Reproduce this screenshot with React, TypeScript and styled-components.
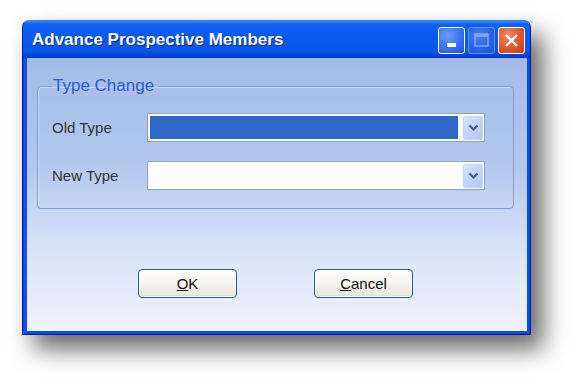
import React from "react";
import styled, { createGlobalStyle } from "styled-components";

const GlobalStyle = createGlobalStyle`
  html, body {
    margin: 0;
    padding: 0;
    background: #ffffff;
  }
  body {
    font-family: "Liberation Sans", Arial, sans-serif;
  }
`;

function ChevronDown() {
  return (
    <svg width="11" height="8" viewBox="0 0 11 8">
      <path d="M1.5 1.5 L5.5 5.5 L9.5 1.5" fill="none" stroke="#4a5a7c" strokeWidth="2.2" />
    </svg>
  );
}

function Combo({ selected }: { selected?: boolean }) {
  return (
    <ComboBox>
      <ComboValue selected={selected} />
      <ComboButton>
        <ChevronDown />
      </ComboButton>
    </ComboBox>
  );
}

function App() {
  return (
    <Page>
      <GlobalStyle />
      <Window>
        <TitleBar>
          <Title>Advance Prospective Members</Title>
          <Controls>
            <CtlButton>
              <svg width="9" height="4" viewBox="0 0 9 4">
                <rect x="0" y="0" width="9" height="4" fill="#ffffff" />
              </svg>
            </CtlButton>
            <CtlButton disabled>
              <svg width="15" height="14" viewBox="0 0 15 14">
                <rect x="1" y="1" width="13" height="12" fill="none" stroke="#8fb0f2" strokeWidth="1.5" />
                <rect x="1" y="1" width="13" height="3" fill="#8fb0f2" />
              </svg>
            </CtlButton>
            <CloseButton>
              <svg width="15" height="15" viewBox="0 0 15 15">
                <path d="M2 2 L13 13 M13 2 L2 13" stroke="#ffffff" strokeWidth="2.4" />
              </svg>
            </CloseButton>
          </Controls>
        </TitleBar>
        <Client>
          <Group>
            <Legend>Type Change</Legend>
            <Row>
              <Label>Old Type</Label>
              <Combo selected />
            </Row>
            <Row>
              <Label>New Type</Label>
              <Combo />
            </Row>
          </Group>
          <Buttons>
            <PushButton>
              <u>O</u>K
            </PushButton>
            <PushButton>
              <u>C</u>ancel
            </PushButton>
          </Buttons>
        </Client>
      </Window>
    </Page>
  );
}

const Page = styled.div`
  width: 586px;
  height: 391px;
  padding: 20px 0 0 22px;
  box-sizing: border-box;
  overflow: hidden;
`;

const Window = styled.div`
  width: 509px;
  height: 315px;
  box-sizing: border-box;
  display: flex;
  flex-direction: column;
  background: linear-gradient(90deg, #0a3fd8 0, #1659ee 2px, #0d4ae0 4px);
  border: 1px solid #0019a8;
  border-top-color: #2f7bff;
  border-radius: 7px 7px 0 0;
  padding: 0 3px 3px 4px;
  box-shadow: 12px 14px 24px rgba(0, 0, 0, 0.6);
`;

const TitleBar = styled.div`
  height: 37px;
  flex-shrink: 0;
  margin: 0 -3px 0 -4px;
  border-radius: 6px 6px 0 0;
  display: flex;
  align-items: center;
  justify-content: space-between;
  padding: 0 5px 0 9px;
  background: linear-gradient(
    #3d8dfb 0,
    #0b62f4 3px,
    #0a5aed 40%,
    #0656e9 80%,
    #0543d3 94%,
    #0336c2 100%
  );
`;

const Title = styled.div`
  color: #ffffff;
  font-weight: bold;
  font-size: 17px;
  text-shadow: 1px 1px 0 #0a2a8a;
  margin-top: 1px;
`;

const Controls = styled.div`
  display: flex;
  gap: 3px;
  margin-top: 1px;
`;

const CtlButton = styled.div<{ disabled?: boolean }>`
  width: 27px;
  height: 27px;
  box-sizing: border-box;
  border: 1px solid ${(p) => (p.disabled ? "#6f95ef" : "#ffffff")};
  border-radius: 3px;
  display: flex;
  align-items: ${(p) => (p.disabled ? "center" : "flex-end")};
  justify-content: center;
  padding-bottom: ${(p) => (p.disabled ? "0" : "6px")};
  background: ${(p) =>
    p.disabled
      ? "radial-gradient(circle at 40% 35%, #4c82f0 0, #2c62e6 60%, #1f52d8 100%)"
      : "radial-gradient(circle at 35% 30%, #6d9cff 0, #3a71f3 55%, #1c50dc 100%)"};
  opacity: ${(p) => (p.disabled ? 0.9 : 1)};
`;

const CloseButton = styled.div`
  width: 27px;
  height: 27px;
  box-sizing: border-box;
  border: 1px solid #ffffff;
  border-radius: 3px;
  display: flex;
  align-items: center;
  justify-content: center;
  background: radial-gradient(circle at 35% 30%, #f08a64 0, #e0552d 55%, #c53f1c 100%);
`;

const Client = styled.div`
  flex: 1;
  display: flex;
  flex-direction: column;
  border-bottom: 2px solid #f2f5fd;
  background: linear-gradient(#a4bbe7 0, #b4c8ee 40%, #dde6f7 75%, #eef2fb 100%);
  padding: 18px 13px 0 10px;
`;

const Group = styled.fieldset`
  margin: 0;
  padding: 17px 28px 18px 14px;
  border: 1px solid #7f9fd6;
  border-radius: 4px;
  box-shadow: inset 1px 1px 0 rgba(255, 255, 255, 0.4);
  display: flex;
  flex-direction: column;
  gap: 19px;
`;

const Legend = styled.legend`
  color: #2a5bd0;
  font-size: 17px;
  line-height: 20px;
  padding: 0 4px 0 1px;
  margin-left: 0;
`;

const Row = styled.div`
  display: flex;
  align-items: center;
`;

const Label = styled.div`
  width: 95px;
  font-size: 15px;
  color: #333;
`;

const ComboBox = styled.div`
  flex: 1;
  height: 29px;
  box-sizing: border-box;
  display: flex;
  align-items: stretch;
  gap: 5px;
  background: #ffffff;
  border: 1px solid #8aa2c4;
  padding: 2px 1px 1px 2px;
`;

const ComboValue = styled.div<{ selected?: boolean }>`
  flex: 1;
  margin-bottom: 1px;
  background: ${(p) => (p.selected ? "#2f68c6" : "#ffffff")};
`;

const ComboButton = styled.div`
  width: 20px;
  box-sizing: border-box;
  display: flex;
  align-items: center;
  justify-content: center;
  border: 1px solid #c4d4f6;
  border-radius: 2px;
  background: linear-gradient(135deg, #d9e4fd 0, #c1d3fb 50%, #b3c8f6 100%);
`;

const Buttons = styled.div`
  display: flex;
  justify-content: center;
  gap: 77px;
  margin-top: 60px;
`;

const PushButton = styled.div`
  width: 99px;
  height: 29px;
  box-sizing: border-box;
  border: 1px solid #2b5a86;
  border-radius: 4px;
  display: flex;
  align-items: center;
  justify-content: center;
  font-size: 15px;
  color: #111;
  background: linear-gradient(#ffffff 0, #f6f5f0 40%, #ebe9e1 90%, #d8d5c8 100%);
  box-shadow: inset 0 0 0 1px #fbfaf6;
`;

export default App;
